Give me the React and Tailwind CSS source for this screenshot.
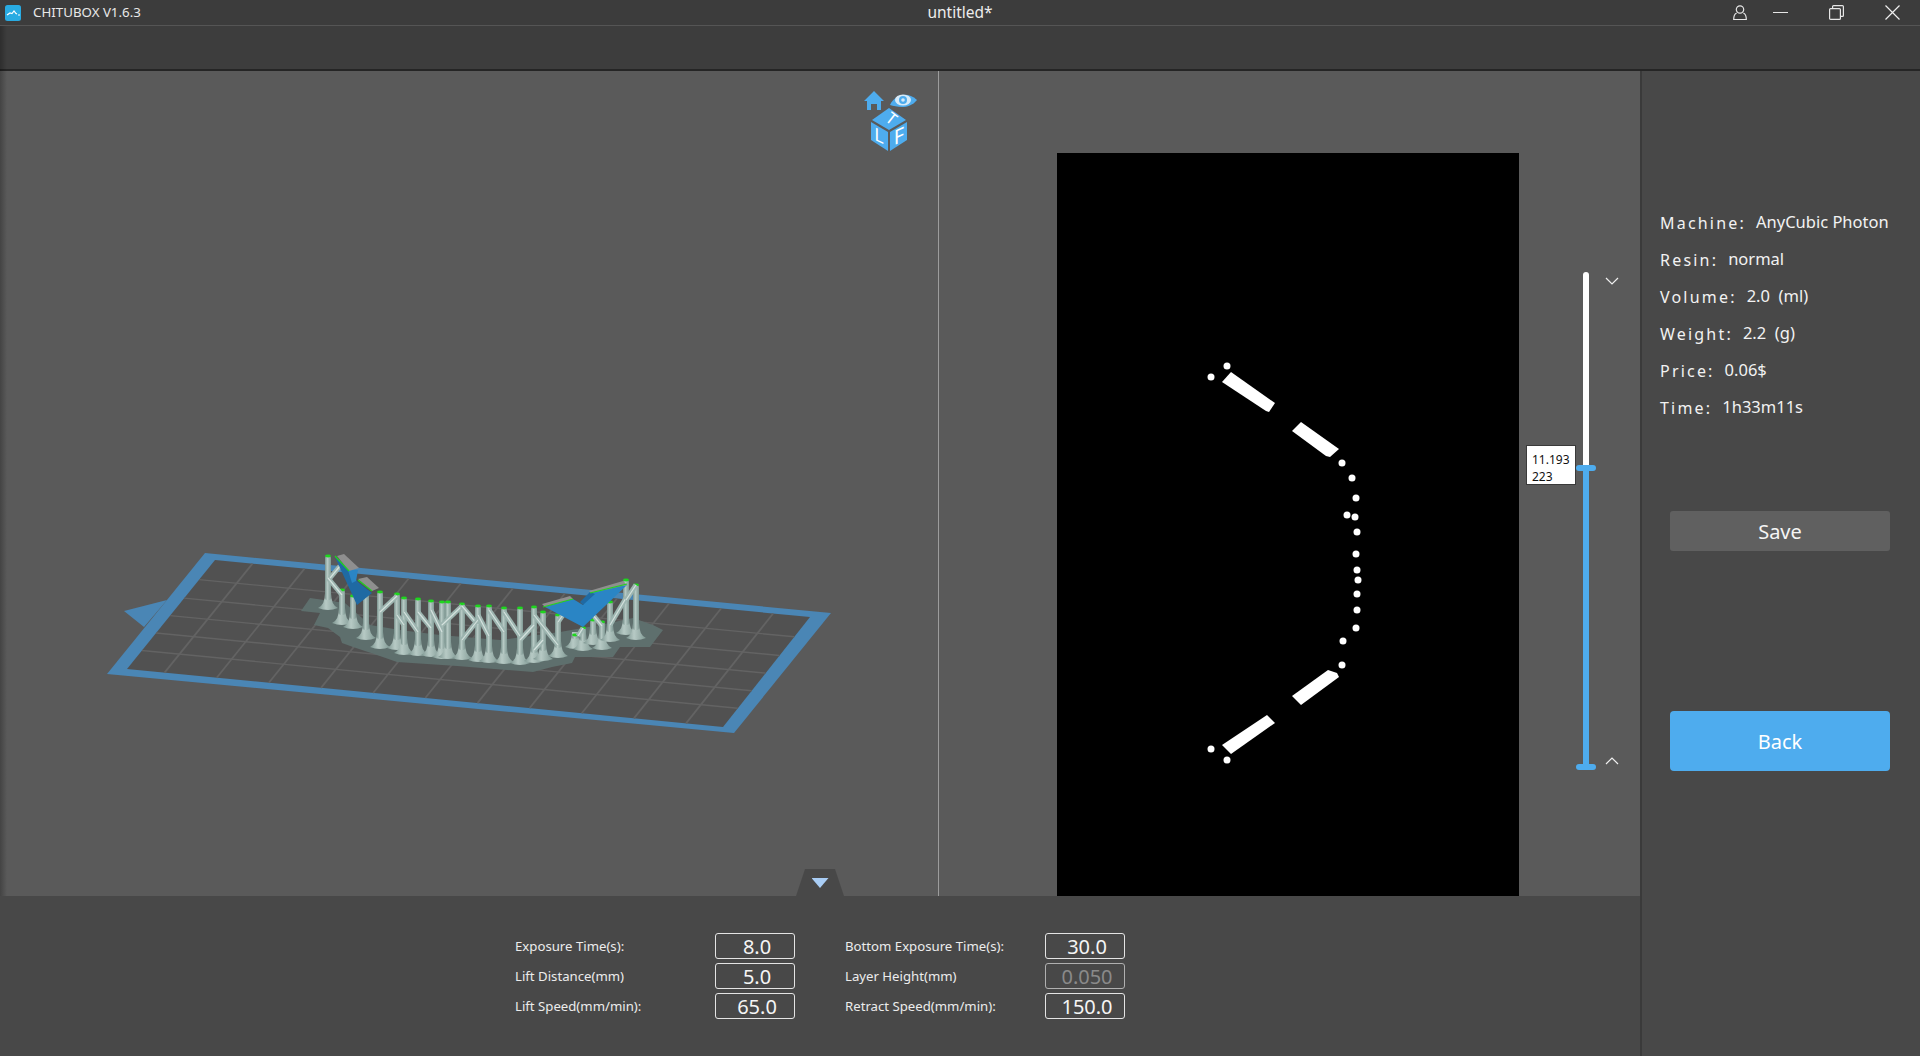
import React from "react";

const font = { fontFamily: '"Noto Sans", "Open Sans", sans-serif' };

// plate corners, page coords
const TL = [215, 560];
const BL = [127, 669];
const BR = [723, 727];
const TR = [810, 617];
const lerp = (a, b, t) => [a[0] + (b[0] - a[0]) * t, a[1] + (b[1] - a[1]) * t];

const colLines = [0, 1, 2, 3, 4, 5, 6, 7, 8, 9, 10].map((i) => 0.063 + i * 0.0875);
const rowLines = [0.18, 0.35, 0.51, 0.67, 0.83];

// x, top, base y
const pillars = [
  [328, 556, 608], [342, 590, 623], [353, 596, 627], [366, 594, 638], [380, 592, 647],
  [397, 594, 648], [404, 598, 653], [418, 599, 654], [431, 601, 655], [442, 602, 657],
  [448, 602, 657], [462, 604, 658], [478, 606, 660], [489, 606, 661], [504, 608, 662],
  [520, 608, 663], [534, 607, 661], [543, 612, 659], [558, 615, 656], [575, 635, 647],
  [583, 628, 649], [593, 620, 643], [602, 622, 648], [610, 602, 640], [626, 580, 633],
  [636, 585, 638],
];

const braces = [
  [328, 578, 342, 595], [340, 566, 330, 578], [380, 612, 397, 596], [397, 615, 404, 625],
  [404, 612, 418, 632], [418, 612, 431, 628], [431, 610, 442, 632], [442, 625, 462, 606],
  [462, 606, 478, 625], [462, 640, 478, 620], [478, 615, 489, 636], [489, 610, 504, 632],
  [504, 612, 520, 636], [520, 640, 534, 625], [534, 615, 558, 645], [543, 640, 534, 650],
  [610, 625, 626, 598], [626, 600, 636, 585], [593, 615, 602, 626], [565, 612, 558, 622],
  [583, 628, 578, 636],
];

const dots = [
  [1211, 377], [1227, 366], [1342, 463], [1352, 478], [1356, 498], [1347, 515], [1355, 517],
  [1357, 532], [1356, 554], [1357, 570], [1358, 580], [1357, 594], [1357, 610], [1356, 628],
  [1343, 641], [1342, 665], [1211, 749], [1227, 760],
];

function PlateView() {
  return (
    <svg viewBox="0 71 938 825" className="w-full h-full block">
      <defs>
        <linearGradient id="stem" x1="0" y1="0" x2="1" y2="0">
          <stop offset="0" stopColor="#7a938e" />
          <stop offset="0.4" stopColor="#b7cac5" />
          <stop offset="1" stopColor="#809994" />
        </linearGradient>
      </defs>
      <polygon points="205,553 107,674 734,733 831,613" fill="#4a86b5" />
      <polygon points="124,611 167,600 144,627" fill="#4a86b5" />
      <polygon points="215,560 127,669 723,727 810,617" fill="#515151" />
      {colLines.map((t) => {
        const a = lerp(TL, TR, t);
        const b = lerp(BL, BR, t);
        return <line key={t} x1={a[0]} y1={a[1]} x2={b[0]} y2={b[1]} stroke="#636363" strokeWidth="1.8" />;
      })}
      {rowLines.map((t) => {
        const a = lerp(TL, BL, t);
        const b = lerp(TR, BR, t);
        return <line key={t} x1={a[0]} y1={a[1]} x2={b[0]} y2={b[1]} stroke="#636363" strokeWidth="1.4" />;
      })}
      {/* raft */}
      <polygon
        points="310,598 301,611 320,613 314,625 328,628 340,637 342,643 353,647 377,655 397,662 457,666 533,672 552,667 572,663 575,657 613,657 620,647 650,647 663,630 653,625 633,618 600,625 560,632 500,640 440,635 400,630 370,625 345,603"
        fill="#5e6f6d"
      />
      {/* supports */}
      {pillars.map(([x, top, base]) => (
        <g key={x + "-" + top}>
          <path
            d={`M${x - 10} ${base} Q${x - 3} ${base - 3} ${x - 3} ${base - 15} L${x + 3} ${base - 15} Q${x + 3} ${base - 3} ${x + 10} ${base} Q${x} ${base + 4} ${x - 10} ${base}Z`}
            fill="url(#stem)"
          />
          <rect x={x - 3} y={top} width="6" height={base - top - 8} rx="2" fill="url(#stem)" />
          <ellipse cx={x} cy={top} rx="3" ry="1.4" fill="#1fd61f" />
        </g>
      ))}
      {braces.map((b, i) => (
        <g key={i}>
          <line x1={b[0]} y1={b[1]} x2={b[2]} y2={b[3]} stroke="#9db5b0" strokeWidth="5" />
          <line x1={b[0]} y1={b[1]} x2={b[2]} y2={b[3]} stroke="#d5e2de" strokeWidth="1.2" />
        </g>
      ))}
      {/* left wing of model */}
      <polygon points="335,557 357,605 372,593 358,582 345,566" fill="#1f6aa3" />
      <polygon points="348,570 358,570 356,581 352,583" fill="#2a85c5" />
      <polygon points="337,556 344,554 359,568 349,571" fill="#8f8f8f" />
      <polygon points="358,579 367,577 379,588 372,591" fill="#8f8f8f" />
      <line x1="335" y1="556" x2="349" y2="571" stroke="#1fd61f" strokeWidth="1.2" />
      <line x1="358" y1="580" x2="372" y2="591" stroke="#1fd61f" strokeWidth="1.2" />
      {/* right wing of model */}
      <polygon points="545,607 573,599 583,605 590,592 627,585 583,627" fill="#2a85c5" />
      <polygon points="590,592 595,594 583,605 580,602" fill="#1f6aa3" />
      <polygon points="542,604 570,596 573,599 545,607" fill="#8f8f8f" />
      <polygon points="589,591 623,581 627,585 591,593" fill="#8f8f8f" />
      <line x1="543" y1="607" x2="573" y2="599" stroke="#1fd61f" strokeWidth="1.2" />
      <line x1="590" y1="593" x2="627" y2="584" stroke="#1fd61f" strokeWidth="1.2" />
    </svg>
  );
}

function ViewCube() {
  return (
    <svg viewBox="864 89 54 66" className="w-[54px] h-[66px] block">
      <polygon points="874,91 884,101 881,101 881,110 877,110 877,104 871,104 871,110 867,110 867,101 864,101" fill="#4eacee" />
      <path d="M890 105 C894 96 906 90 917 100 C909 110 897 107 890 105Z" fill="#4eacee" />
      <ellipse cx="903" cy="100" rx="8" ry="5.5" fill="#d7ebf9" />
      <circle cx="903" cy="100" r="4" fill="#4eacee" />
      <circle cx="903" cy="100" r="1.8" fill="#d7ebf9" />
      <polygon points="889,108 906,120 889,130 872,120" fill="#4eacee" />
      <polygon points="871,122 888,132 888,151 871,140" fill="#4eacee" />
      <polygon points="890,132 907,122 907,140 890,151" fill="#4eacee" />
      <text x="0" y="0" transform="translate(888,123) rotate(38)" textAnchor="middle" fontSize="16" fill="#fff" style={font}>T</text>
      <text x="0" y="0" transform="translate(879,142) skewY(25)" textAnchor="middle" fontSize="18" fill="#fff" style={font}>L</text>
      <text x="0" y="0" transform="translate(899,143) skewY(-25)" textAnchor="middle" fontSize="20" fill="#fff" style={font}>F</text>
    </svg>
  );
}

function SliceView() {
  return (
    <svg viewBox="1057 153 462 743" className="w-full h-full block">
      <polygon points="1222,382 1231,372 1275,403 1269,412 1266,411" fill="#fff" />
      <polygon points="1292,431 1301,422 1339,449 1330,457 1326,456" fill="#fff" />
      <polygon points="1292,696 1301,705 1339,677 1337,673 1328,670" fill="#fff" />
      <polygon points="1222,745 1231,754 1275,723 1267,715" fill="#fff" />
      {dots.map(([x, y]) => (
        <circle key={x + "-" + y} cx={x} cy={y} r="3.5" fill="#fff" />
      ))}
    </svg>
  );
}

function Chevron({ up }) {
  return (
    <svg viewBox="0 0 14 8" className="w-[14px] h-[8px] block">
      <polyline
        points={up ? "1,7 7,1 13,7" : "1,1 7,7 13,1"}
        fill="none"
        stroke="#f0f0f0"
        strokeWidth="1.2"
      />
    </svg>
  );
}

function Info({ label, value }) {
  return (
    <div className="h-[37px] flex items-center text-[#f2f2f2] whitespace-pre">
      <span className="text-[16px] tracking-[2.2px]">{label}</span>
      <span className="ml-[10px] text-[16.5px]">{value}</span>
    </div>
  );
}

function Field({ label, value, disabled }) {
  return (
    <div className="flex items-center h-[26px]">
      <div className="w-[200px] text-[13.2px] text-[#ececec] pt-[2px]">{label}</div>
      <div
        className={
          "w-[80px] h-[26px] rounded-[3px] border flex items-center justify-center pl-1 pt-[2px] text-[20px] leading-none " +
          (disabled ? "border-[#b0b0b0] text-[#8a8a8a]" : "border-[#e4e4e4] text-[#f5f5f5]")
        }
      >
        {value}
      </div>
    </div>
  );
}

function App() {
  return (
    <div style={font} className="w-[1920px] h-[1056px] flex flex-col overflow-hidden bg-[#484848]">
      {/* title bar */}
      <div className="h-[26px] shrink-0 bg-[#3c3c3c] border-b border-[#555555] flex items-center relative">
        <svg viewBox="0 0 16 16" className="w-4 h-4 ml-[5px] block">
          <rect width="16" height="16" rx="2.5" fill="#29abe2" />
          <polyline points="2,10 5,8 7,8.5 9,6 11,8.5 12,9" fill="none" stroke="#fff" strokeWidth="1.2" />
          <line x1="13" y1="10" x2="15" y2="10" stroke="#fff" strokeWidth="1" />
        </svg>
        <span className="ml-3 pt-[1px] text-[13.3px] text-[#e8e8e8]">CHITUBOX V1.6.3</span>
        <span className="absolute left-0 right-0 text-center pt-[1px] text-[15.5px] text-[#ececec]">untitled*</span>
        <div className="ml-auto flex items-center">
          <svg viewBox="0 0 14 16" className="w-[14px] h-4 mr-[26px] block" fill="none" stroke="#e6e6e6" strokeWidth="1.2">
            <circle cx="7" cy="4.5" r="3.7" />
            <path d="M3.6 8 C1.5 9 0.7 11 0.7 14.5 H13.3 C13.3 11 12.5 9 10.4 8" />
          </svg>
          <div className="w-[15px] h-px bg-[#e6e6e6] mr-[41px]" />
          <svg viewBox="0 0 15 15" className="w-[15px] h-[15px] mr-[41px] block" fill="none" stroke="#e6e6e6" strokeWidth="1.2">
            <rect x="0.6" y="3.6" width="10.8" height="10.8" rx="1" />
            <path d="M3.6 3.4 V1.6 C3.6 1 4 0.6 4.6 0.6 H13.4 C14 0.6 14.4 1 14.4 1.6 V10.4 C14.4 11 14 11.4 13.4 11.4 H11.6" />
          </svg>
          <svg viewBox="0 0 15 15" className="w-[15px] h-[15px] mr-5 block" fill="none" stroke="#eeeeee" strokeWidth="1.2">
            <path d="M0.5 0.5 L14.5 14.5 M14.5 0.5 L0.5 14.5" />
          </svg>
        </div>
      </div>

      {/* toolbar */}
      <div className="h-[45px] shrink-0 bg-[#3d3d3d] border-b-2 border-[#252525]" />

      <div className="flex-1 flex min-h-0 relative">
        <div className="absolute left-0 top-[-45px] bottom-[160px] w-[7px] bg-gradient-to-r from-[#00000040] to-transparent pointer-events-none z-10" />

        <div className="w-[1640px] shrink-0 flex flex-col">
          <div className="flex h-[825px] bg-[#5a5a5a] relative">
            {/* 3d view */}
            <div className="w-[938px] h-full relative">
              <PlateView />
              <div className="absolute left-[864px] top-[18px]">
                <ViewCube />
              </div>
            </div>
            <div className="w-[1px] h-full bg-[#9c9c9c]" />

            {/* slice preview */}
            <div className="flex-1 flex">
              <div className="ml-[118px] mt-[82px] w-[462px] h-[743px] bg-black shrink-0">
                <SliceView />
              </div>
              <div className="ml-[57px] mt-[201px] w-[20px] h-[498px] flex flex-col items-center relative">
                <div className="w-[6px] h-[193px] bg-white rounded-t-[3px]" />
                <div className="w-[20px] h-[6px] bg-[#4eacee] rounded-[3px]" />
                <div className="w-[6px] h-[293px] bg-[#4eacee]" />
                <div className="w-[20px] h-[6px] bg-[#4eacee] rounded-[3px]" />
                <div className="absolute right-[20px] top-[173px] w-[50px] h-[40px] bg-white border border-[#3a3a3a] pl-[5px] pt-[5px] text-[12px] leading-[17px] text-[#111111]">
                  <div>11.193</div>
                  <div>223</div>
                </div>
                <div className="absolute left-[29px] top-[5px]">
                  <Chevron />
                </div>
                <div className="absolute left-[29px] top-[485px]">
                  <Chevron up />
                </div>
              </div>
            </div>

            {/* collapse tab */}
            <div className="absolute left-[796px] bottom-0 w-[48px] h-[27px] bg-[#484848] [clip-path:polygon(9px_0,39px_0,48px_100%,0_100%)] flex justify-center pt-[9px]">
              <div className="w-[17px] h-[10px] bg-[#a9cdf5] [clip-path:polygon(0_0,100%_0,50%_100%)]" />
            </div>
          </div>

          {/* print settings */}
          <div className="flex-1 bg-[#484848] pl-[515px] pt-[37px] flex gap-[50px]">
            <div className="flex flex-col gap-[4px]">
              <Field label="Exposure Time(s):" value="8.0" />
              <Field label="Lift Distance(mm)" value="5.0" />
              <Field label="Lift Speed(mm/min):" value="65.0" />
            </div>
            <div className="flex flex-col gap-[4px]">
              <Field label="Bottom Exposure Time(s):" value="30.0" />
              <Field label="Layer Height(mm)" value="0.050" disabled />
              <Field label="Retract Speed(mm/min):" value="150.0" />
            </div>
          </div>
        </div>

        {/* right panel */}
        <div className="flex-1 border-l-2 border-[#3a3a3a] bg-[#484848] pl-[18px] pt-[133px]">
          <Info label="Machine:" value="AnyCubic Photon" />
          <Info label="Resin:" value="normal" />
          <Info label="Volume:" value="2.0  (ml)" />
          <Info label="Weight:" value="2.2  (g)" />
          <Info label="Price:" value="0.06$" />
          <Info label="Time:" value="1h33m11s" />
          <button className="mt-[85px] ml-[10px] w-[220px] h-[40px] pt-[1px] rounded-[3px] bg-[#606060] text-[20px] text-[#f5f5f5] block">
            Save
          </button>
          <button className="mt-[160px] ml-[10px] w-[220px] h-[60px] pt-[1px] rounded-[4px] bg-[#4eacee] text-[20px] text-white block">
            Back
          </button>
        </div>
      </div>
    </div>
  );
}

export default App;
